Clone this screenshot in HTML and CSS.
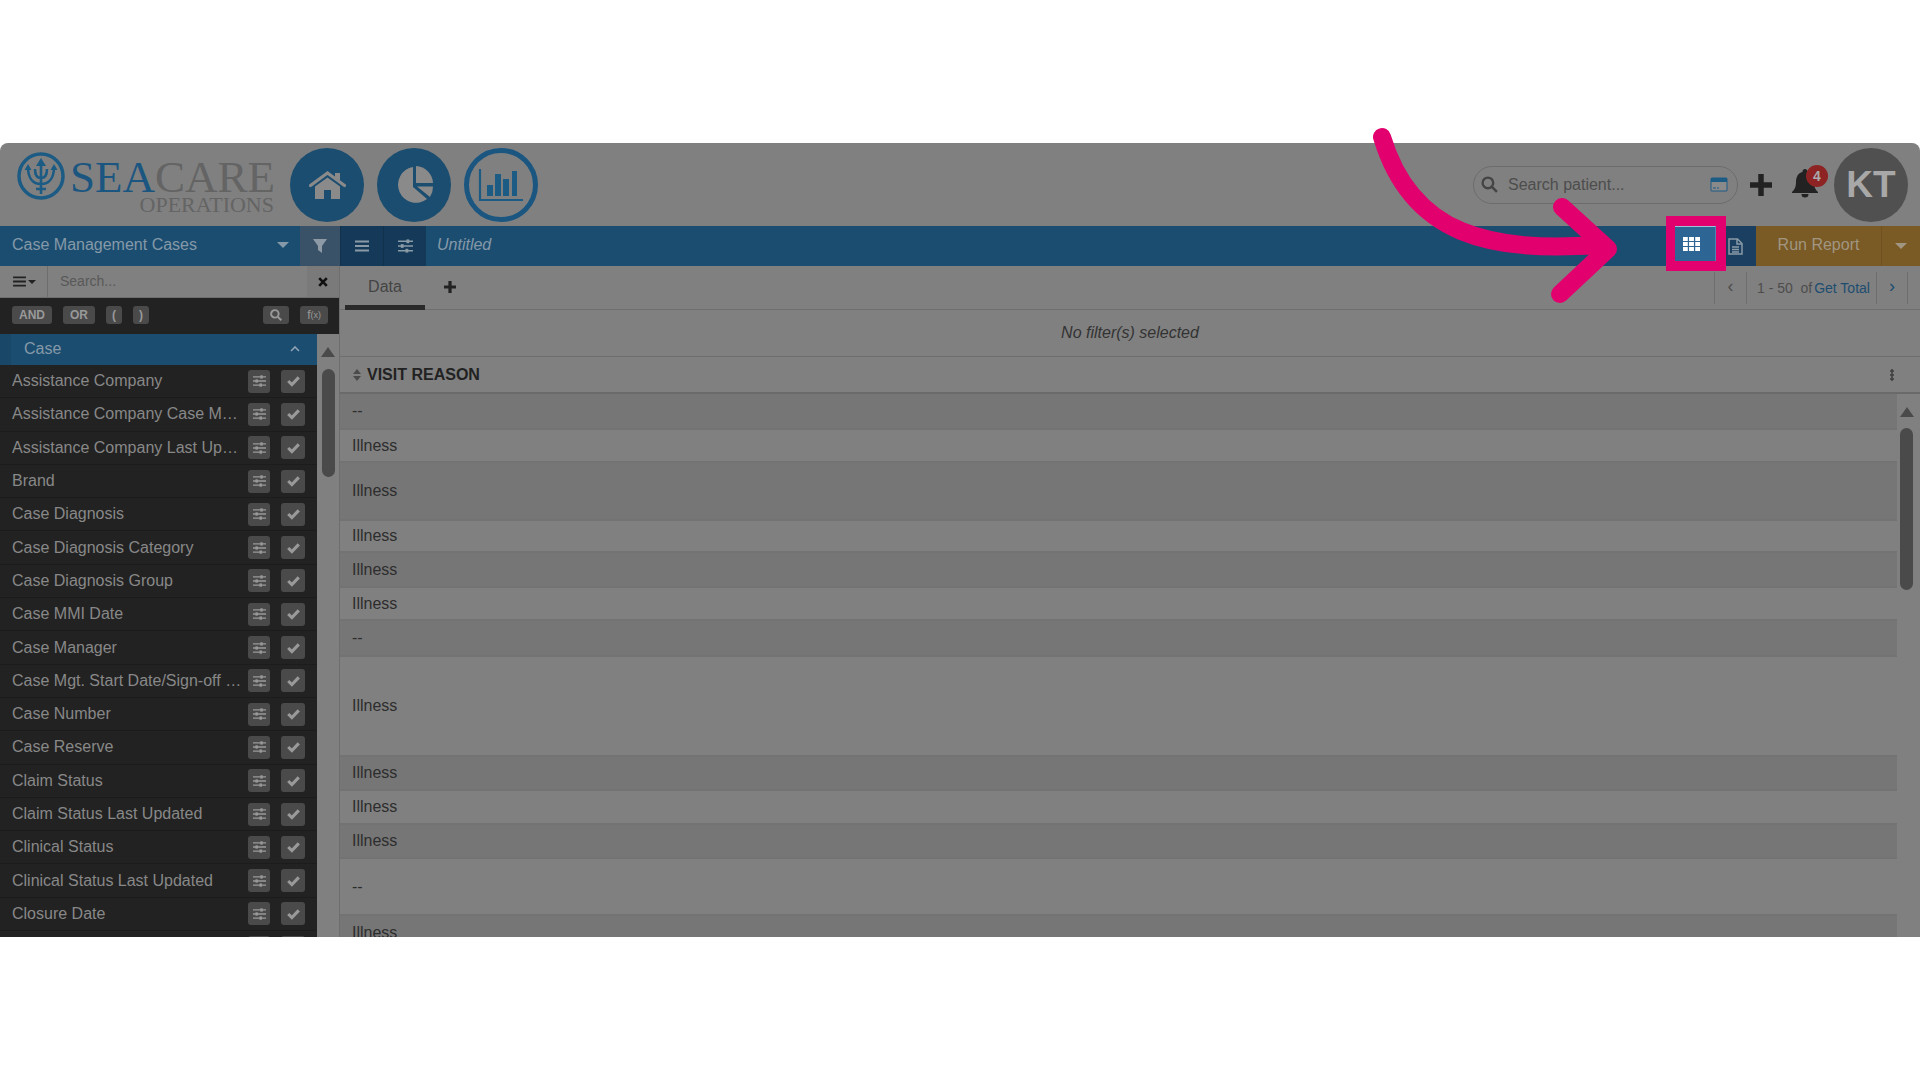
FILE: index.html
```html
<!DOCTYPE html>
<html lang="en">
<head>
  <meta charset="UTF-8">
  <title>Seacare Operations</title>
  <link rel="stylesheet" href="styles.css">
</head>
<body>
  <svg class="defs" width="0" height="0">
    <symbol id="sliders" viewBox="0 0 16 14">
      <path d="M0 2h16M0 7h16M0 12h16" stroke="currentColor" stroke-width="1.6"/>
      <rect x="9" y="0" width="3" height="4" fill="currentColor"/>
      <rect x="3" y="5" width="3" height="4" fill="currentColor"/>
      <rect x="8" y="10" width="3" height="4" fill="currentColor"/>
    </symbol>
    <symbol id="check" viewBox="0 0 16 14">
      <path d="M1.5 7l4.500 4.500 8.500-9" fill="none" stroke="currentColor" stroke-width="3.800"/>
    </symbol>
  </svg>

  <div class="app">
    <header class="top">
      <div class="logo">
        <svg class="trident" viewBox="0 0 48 48">
          <circle cx="24" cy="24" r="22" fill="none" stroke="#1c5b84" stroke-width="3.500"/>
          <path d="M24 11v31M11 15c0 11 5 17 13 17s13-6 13-17M18 17c0 6 2 9 6 9s6-3 6-9M19 37h10" fill="none" stroke="#1c5b84" stroke-width="2.600"/>
          <path d="M24 6l5 8h-10zM11 12l3.500 6h-7zM37 12l3.500 6h-7z" fill="#1c5b84"/>
        </svg>
        <div class="logo-text">
          <div class="logo-name"><span class="sea">SEA</span>CARE</div>
          <div class="logo-sub">OPERATIONS</div>
        </div>
      </div>
      <nav class="nav-circles">
        <a class="circle">
          <svg viewBox="0 0 37 28" width="37" height="28"><path d="M1.500 14.500L18.500 2l17 12.500" fill="none" stroke="#8a8a8a" stroke-width="3.200" stroke-linecap="round"/><path d="M26 2h5v8l-5-4z" fill="#8a8a8a"/><path d="M18.500 6.500L6 15.500V28h9V19h7v9h9V15.500z" fill="#8a8a8a"/></svg>
        </a>
        <a class="circle">
          <svg viewBox="0 0 40 40" width="40" height="40"><path d="M19 2A18 18 0 1 0 33 34L19 22z" fill="#8a8a8a"/><path d="M22 1A18 18 0 0 1 39 18H22z" fill="#8a8a8a"/><path d="M23 21.500H39A19 19 0 0 1 36 32z" fill="#8a8a8a"/></svg>
        </a>
        <a class="circle circle-line">
          <svg viewBox="0 0 46 34" width="46" height="34"><path d="M2 1v31h43" fill="none" stroke="#1c5b84" stroke-width="2.200"/><path d="M9 17h6v11H9zM17 6h6v22h-6zM25 11h6v17h-6zM34 3h5v25h-5z" fill="#1c5b84"/></svg>
        </a>
      </nav>
      <div class="top-right">
        <div class="patient-search">
          <svg viewBox="0 0 16 16" width="17" height="17"><circle cx="6.500" cy="6.500" r="5" fill="none" stroke="#444" stroke-width="2.200"/><path d="M10.500 10.500L15 15" stroke="#444" stroke-width="2.400"/></svg>
          <span class="patient-text">Search patient...</span>
          <svg viewBox="0 0 18 15" width="18" height="15"><rect x="0.500" y="0.500" width="17" height="14" rx="1.500" fill="#1c5b84"/><rect x="1.500" y="5" width="15" height="8.500" fill="#8a8a8a"/><path d="M3 11h3M7 11h2" stroke="#1c5b84"/></svg>
        </div>
        <svg class="plus-icon" viewBox="0 0 22 22" width="22" height="22"><path d="M11 1v20M1 11h20" stroke="#222" stroke-width="5.500" stroke-linecap="round"/></svg>
        <div class="bell">
          <svg viewBox="0 0 26 30" width="26" height="30"><path d="M13 1a2.500 2.500 0 0 1 2.500 3C20 5 22 9 22 14c0 6 2 8 4 10v1H0v-1c2-2 4-4 4-10 0-5 2-9 6.500-10A2.500 2.500 0 0 1 13 1zM9.500 26h7a3.500 3.500 0 0 1-7 0z" fill="#222"/></svg>
          <span class="bell-badge">4</span>
        </div>
        <div class="avatar">KT</div>
      </div>
    </header>

    <div class="bar">
      <div class="bar-select">
        <span>Case Management Cases</span>
        <i class="caret"></i>
      </div>
      <div class="bar-filter">
        <svg viewBox="0 0 14 14" width="14" height="14"><path d="M0 0h14L9 7v7L5 11V7z" fill="#8d9aa6"/></svg>
      </div>
      <div class="bar-btn">
        <svg viewBox="0 0 14 12" width="14" height="12"><path d="M0 1.500h14M0 6h14M0 10.500h14" stroke="#8a9aa6" stroke-width="2"/></svg>
      </div>
      <div class="bar-btn">
        <svg width="15" height="14" class="slider-light"><use href="#sliders"/></svg>
      </div>
      <div class="bar-title">Untitled</div>
      <div class="grid-wrap">
        <div class="grid-btn">
          <svg viewBox="0 0 16 13" width="17" height="14"><path d="M0 0h4.500v3.700H0zM5.700 0h4.600v3.700H5.700zM11.500 0H16v3.700h-4.500zM0 4.700h4.500v3.600H0zM5.700 4.700h4.600v3.600H5.700zM11.500 4.700H16v3.600h-4.500zM0 9.300h4.500V13H0zM5.700 9.300h4.600V13H5.700zM11.500 9.300H16V13h-4.500z" fill="#fff"/></svg>
        </div>
      </div>
      <div class="doc-btn">
        <svg viewBox="0 0 15 17" width="15" height="17"><path d="M1 1h8.500L14 5.500V16H1z" fill="none" stroke="#8a9aa6" stroke-width="1.500"/><path d="M9 1v5h5" fill="none" stroke="#8a9aa6" stroke-width="1.500"/><path d="M4 9h7M4 11.500h7M4 14h7" stroke="#8a9aa6" stroke-width="1.300"/></svg>
      </div>
      <div class="run-btn">Run Report</div>
      <div class="run-caret"><i class="caret"></i></div>
    </div>

    <div class="content">
      <aside class="side">
        <div class="side-search">
          <div class="side-menu">
            <svg viewBox="0 0 14 12" width="13" height="11"><path d="M0 1.500h14M0 6h14M0 10.500h14" stroke="#222" stroke-width="2"/></svg>
            <i class="caret caret-small"></i>
          </div>
          <div class="side-input">Search...</div>
          <div class="side-clear">
            <svg viewBox="0 0 10 10" width="10" height="10"><path d="M1.200 1.200l7.600 7.600M8.800 1.200L1.200 8.800" stroke="#111" stroke-width="2.600"/></svg>
          </div>
        </div>
        <div class="side-tools">
          <span class="chip chip-bold">AND</span>
          <span class="chip chip-bold">OR</span>
          <span class="chip chip-bold chip-paren">(</span>
          <span class="chip chip-bold chip-paren">)</span>
          <span class="chip chip-search">
            <svg viewBox="0 0 16 16" width="12" height="12"><circle cx="6.500" cy="6.500" r="5" fill="none" stroke="#999" stroke-width="2.600"/><path d="M10.500 10.500L15 15" stroke="#999" stroke-width="2.800"/></svg>
          </span>
          <span class="chip chip-fx">f<sub>(x)</sub></span>
        </div>
        <div class="side-body">
          <div class="side-list">
            <div class="group">
              <span>Case</span>
              <svg viewBox="0 0 10 6" width="10" height="6"><path d="M1 5l4-4 4 4" fill="none" stroke="#8fa4b4" stroke-width="1.600"/></svg>
            </div>
            <div class="field"><span class="field-name">Assistance Company</span><b class="mini"><svg><use href="#sliders"/></svg></b><b class="mini mini-check"><svg><use href="#check"/></svg></b></div>
            <div class="field"><span class="field-name">Assistance Company Case Manager</span><b class="mini"><svg><use href="#sliders"/></svg></b><b class="mini mini-check"><svg><use href="#check"/></svg></b></div>
            <div class="field"><span class="field-name">Assistance Company Last Updated</span><b class="mini"><svg><use href="#sliders"/></svg></b><b class="mini mini-check"><svg><use href="#check"/></svg></b></div>
            <div class="field"><span class="field-name">Brand</span><b class="mini"><svg><use href="#sliders"/></svg></b><b class="mini mini-check"><svg><use href="#check"/></svg></b></div>
            <div class="field"><span class="field-name">Case Diagnosis</span><b class="mini"><svg><use href="#sliders"/></svg></b><b class="mini mini-check"><svg><use href="#check"/></svg></b></div>
            <div class="field"><span class="field-name">Case Diagnosis Category</span><b class="mini"><svg><use href="#sliders"/></svg></b><b class="mini mini-check"><svg><use href="#check"/></svg></b></div>
            <div class="field"><span class="field-name">Case Diagnosis Group</span><b class="mini"><svg><use href="#sliders"/></svg></b><b class="mini mini-check"><svg><use href="#check"/></svg></b></div>
            <div class="field"><span class="field-name">Case MMI Date</span><b class="mini"><svg><use href="#sliders"/></svg></b><b class="mini mini-check"><svg><use href="#check"/></svg></b></div>
            <div class="field"><span class="field-name">Case Manager</span><b class="mini"><svg><use href="#sliders"/></svg></b><b class="mini mini-check"><svg><use href="#check"/></svg></b></div>
            <div class="field"><span class="field-name">Case Mgt. Start Date/Sign-off Date</span><b class="mini"><svg><use href="#sliders"/></svg></b><b class="mini mini-check"><svg><use href="#check"/></svg></b></div>
            <div class="field"><span class="field-name">Case Number</span><b class="mini"><svg><use href="#sliders"/></svg></b><b class="mini mini-check"><svg><use href="#check"/></svg></b></div>
            <div class="field"><span class="field-name">Case Reserve</span><b class="mini"><svg><use href="#sliders"/></svg></b><b class="mini mini-check"><svg><use href="#check"/></svg></b></div>
            <div class="field"><span class="field-name">Claim Status</span><b class="mini"><svg><use href="#sliders"/></svg></b><b class="mini mini-check"><svg><use href="#check"/></svg></b></div>
            <div class="field"><span class="field-name">Claim Status Last Updated</span><b class="mini"><svg><use href="#sliders"/></svg></b><b class="mini mini-check"><svg><use href="#check"/></svg></b></div>
            <div class="field"><span class="field-name">Clinical Status</span><b class="mini"><svg><use href="#sliders"/></svg></b><b class="mini mini-check"><svg><use href="#check"/></svg></b></div>
            <div class="field"><span class="field-name">Clinical Status Last Updated</span><b class="mini"><svg><use href="#sliders"/></svg></b><b class="mini mini-check"><svg><use href="#check"/></svg></b></div>
            <div class="field"><span class="field-name">Closure Date</span><b class="mini"><svg><use href="#sliders"/></svg></b><b class="mini mini-check"><svg><use href="#check"/></svg></b></div>
            <div class="field"><span class="field-name"></span><b class="mini"></b><b class="mini mini-check"></b></div>
          </div>
          <div class="side-scroll">
            <i class="arrow-up"></i>
            <i class="side-thumb"></i>
          </div>
        </div>
      </aside>

      <main class="main">
        <div class="tabs">
          <div class="tab">Data</div>
          <svg class="tab-add" viewBox="0 0 14 14" width="14" height="14"><path d="M7 1v12M1 7h12" stroke="#222" stroke-width="3.200"/></svg>
          <div class="pager">
            <span class="pager-arrow">&#8249;</span>
            <span class="pager-text">1 - 50&nbsp; of <a>Get Total</a></span>
            <span class="pager-arrow pager-next">&#8250;</span>
          </div>
        </div>
        <div class="filters">No filter(s) selected</div>
        <div class="col-head">
          <svg viewBox="0 0 8 12" width="8" height="12"><path d="M4 0l4 5H0zM4 12l4-5H0z" fill="#4a4a4a"/></svg>
          <span class="col-title">VISIT REASON</span>
          <span class="col-dots"></span>
        </div>
        <div class="table-wrap">
          <div class="rows">
            <div class="row odd h36">--</div>
            <div class="row h33">Illness</div>
            <div class="row odd h58">Illness</div>
            <div class="row h32">Illness</div>
            <div class="row odd h35">Illness</div>
            <div class="row h33">Illness</div>
            <div class="row odd h36">--</div>
            <div class="row h100">Illness</div>
            <div class="row odd h34">Illness</div>
            <div class="row h34">Illness</div>
            <div class="row odd h34">Illness</div>
            <div class="row h57">--</div>
            <div class="row odd h36">Illness</div>
          </div>
          <div class="table-scroll">
            <i class="arrow-up"></i>
            <i class="table-thumb"></i>
          </div>
        </div>
      </main>
    </div>
  </div>

  <svg class="pointer" viewBox="0 0 400 200" width="400" height="200">
    <path d="M10 10C40 110 120 125 226 118" fill="none" stroke="#e2006f" stroke-width="18" stroke-linecap="round"/>
    <path d="M190 80L236 122 188 167" fill="none" stroke="#e2006f" stroke-width="18" stroke-linecap="round" stroke-linejoin="round"/>
  </svg>
</body>
</html>
```

FILE: styles.css
```css
* {
  box-sizing: border-box;
}
html, body {
  margin: 0;
  height: 100%;
  background: #fff;
  overflow: hidden;
}
body {
  padding-top: 143px;
  font-family: "Liberation Sans", Arial, sans-serif;
  position: relative;
}
.defs {
  position: absolute;
}
.app {
  height: 794px;
  background: #808080;
  border-radius: 8px 8px 0 0;
  overflow: hidden;
  display: flex;
  flex-direction: column;
}

/* top header */
.top {
  height: 83px;
  display: flex;
  align-items: center;
  padding-left: 17px;
  flex-shrink: 0;
}
.logo {
  width: 273px;
  height: 83px;
  display: flex;
  align-items: flex-start;
}
.trident {
  width: 48px;
  height: 48px;
  flex-shrink: 0;
  margin-top: 9px;
}
.logo-text {
  font-family: "Liberation Serif", serif;
  color: #646464;
  text-align: right;
  margin-left: 5px;
  width: 204px;
}
.logo-name {
  font-size: 45px;
  line-height: 45px;
  margin-top: 12px;
  white-space: nowrap;
}
.sea {
  color: #1b5680;
}
.logo-sub {
  font-size: 22px;
  line-height: 20px;
  margin-top: -5px;
}
.nav-circles {
  display: flex;
  gap: 13px;
}
.circle {
  width: 74px;
  height: 74px;
  border-radius: 50%;
  background: #1b4d70;
  display: flex;
  align-items: center;
  justify-content: center;
}
.circle-line {
  background: #808080;
  border: 5px solid #1b5680;
}
.top-right {
  margin-left: auto;
  display: flex;
  align-items: center;
  padding-right: 12px;
}
.patient-search {
  width: 265px;
  height: 38px;
  border: 1px solid #6c6c6c;
  border-radius: 19px;
  display: flex;
  align-items: center;
  padding: 0 9px 0 7px;
}
.patient-text {
  flex: 1;
  margin-left: 10px;
  color: #4d4d4d;
  font-size: 16px;
}
.plus-icon {
  margin-left: 12px;
}
.bell {
  position: relative;
  margin-left: 20px;
  height: 34px;
}
.bell-badge {
  position: absolute;
  top: -3px;
  right: -10px;
  width: 22px;
  height: 22px;
  border-radius: 50%;
  background: #8d2323;
  color: #aaa;
  font-size: 14px;
  font-weight: bold;
  text-align: center;
  line-height: 22px;
}
.avatar {
  width: 74px;
  height: 74px;
  margin-left: 16px;
  border-radius: 50%;
  background: #505050;
  color: #a8a8a8;
  font-size: 37px;
  font-weight: bold;
  text-align: center;
  line-height: 74px;
}

/* blue bar */
.bar {
  height: 40px;
  background: #1b4d70;
  display: flex;
  align-items: stretch;
  flex-shrink: 0;
  color: #8599a8;
  font-size: 16px;
}
.bar-select {
  width: 300px;
  display: flex;
  align-items: center;
  justify-content: space-between;
  padding: 0 11px 2px 12px;
}
.caret {
  display: block;
  width: 0;
  height: 0;
  border-left: 6px solid transparent;
  border-right: 6px solid transparent;
  border-top: 6px solid #8599a8;
}
.caret-small {
  border-left-width: 4px;
  border-right-width: 4px;
  border-top: 4px solid #222;
  margin-left: 2px;
}
.bar-filter {
  width: 40px;
  background: #3a5268;
  display: flex;
  align-items: center;
  justify-content: center;
}
.bar-btn {
  width: 43px;
  background: #153a59;
  border-left: 1px solid #12324c;
  display: flex;
  align-items: center;
  justify-content: center;
}
.slider-light {
  color: #8a9aa6;
}
.bar-title {
  flex: 1;
  padding-left: 11px;
  font-style: italic;
  line-height: 38px;
}
.grid-wrap {
  width: 60px;
  height: 55px;
  margin-top: -10px;
  margin-bottom: -5px;
  border: 9px solid #e2006f;
  border-width: 10px 10px 10px 9px;
  position: relative;
  z-index: 2;
}
.grid-btn {
  height: 100%;
  background: #2d6595;
  border-top: 1px solid #9fc0d8;
  border-right: 1px solid #4a86b4;
  padding-right: 8px;
  display: flex;
  align-items: center;
  justify-content: center;
}
.doc-btn {
  width: 30px;
  background: #1a3f60;
  padding-left: 2px;
  display: flex;
  align-items: center;
}
.run-btn {
  width: 125px;
  background: #7a5a25;
  color: #a09682;
  font-size: 16px;
  text-align: center;
  line-height: 38px;
}
.run-caret {
  width: 39px;
  background: #7a5a25;
  border-left: 1px solid #6f5220;
  display: flex;
  align-items: center;
  justify-content: center;
}
.run-caret .caret {
  border-top-color: #a09682;
}

/* field list */
.content {
  flex: 1;
  display: flex;
  min-height: 0;
}
.side {
  width: 340px;
  flex-shrink: 0;
  display: flex;
  flex-direction: column;
  border-right: 1px solid #6e6e6e;
}
.side-search {
  height: 32px;
  display: flex;
  align-items: stretch;
  flex-shrink: 0;
  border-bottom: 1px solid #6e6e6e;
}
.side-menu {
  width: 48px;
  padding-left: 2px;
  display: flex;
  align-items: center;
  justify-content: center;
  border-right: 1px solid #6e6e6e;
}
.side-input {
  flex: 1;
  padding-left: 12px;
  color: #585858;
  font-size: 14px;
  line-height: 30px;
}
.side-clear {
  width: 32px;
  background: #7a7a7a;
  display: flex;
  align-items: center;
  justify-content: center;
}
.side-tools {
  height: 36px;
  background: #222;
  display: flex;
  align-items: center;
  padding: 0 11px 2px 12px;
  gap: 11px;
  flex-shrink: 0;
}
.chip {
  height: 18px;
  padding: 0 7px;
  border-radius: 3px;
  background: #4a4a4a;
  color: #999;
  font-size: 12px;
  line-height: 18px;
  display: flex;
  align-items: center;
}
.chip-bold {
  font-weight: bold;
}
.chip-paren {
  padding: 0 6px;
}
.chip-search {
  margin-left: auto;
  padding: 0 7px;
}
.chip-fx {
  padding: 0 7px;
}
.chip-fx sub {
  font-size: 9px;
  line-height: 0;
}
.side-body {
  flex: 1;
  display: flex;
  min-height: 0;
}
.side-list {
  width: 317px;
  background: #222;
  overflow: hidden;
}
.group {
  height: 31px;
  background: #1b4d70;
  border-left: 11px solid #194767;
  display: flex;
  align-items: center;
  justify-content: space-between;
  padding: 0 17px 2px 13px;
  color: #8599a8;
  font-size: 16px;
}
.field {
  height: 33.3px;
  display: flex;
  align-items: center;
  padding: 0 12px;
  border-bottom: 1px solid #1c1c1c;
  color: #888;
  font-size: 16px;
}
.field-name {
  flex: 1;
  min-width: 0;
  white-space: nowrap;
  overflow: hidden;
  text-overflow: ellipsis;
  padding-right: 4px;
}
.mini {
  width: 22px;
  height: 23px;
  border-radius: 3px;
  background: #4a4a4a;
  color: #999;
  display: flex;
  align-items: center;
  justify-content: center;
}
.mini svg {
  width: 13px;
  height: 12px;
}
.mini-check {
  width: 24px;
  margin-left: 11px;
}
.side-scroll {
  flex: 1;
  display: flex;
  flex-direction: column;
  align-items: center;
  padding-top: 13px;
}
.arrow-up {
  display: block;
  width: 0;
  height: 0;
  border-left: 7px solid transparent;
  border-right: 7px solid transparent;
  border-bottom: 10px solid #4a4a4a;
}
.side-thumb {
  display: block;
  width: 13px;
  height: 108px;
  margin-top: 12px;
  border-radius: 7px;
  background: #4a4a4a;
}

/* data panel */
.main {
  flex: 1;
  min-width: 0;
  display: flex;
  flex-direction: column;
}
.tabs {
  height: 44px;
  display: flex;
  align-items: flex-start;
  border-bottom: 1px solid #6e6e6e;
  flex-shrink: 0;
  position: relative;
}
.tab {
  width: 80px;
  height: 44px;
  margin-left: 5px;
  border-bottom: 5px solid #2a2a2a;
  color: #444;
  font-size: 16px;
  text-align: center;
  line-height: 41px;
}
.tab-add {
  margin: 14px 0 0 18px;
}
.pager {
  margin-left: auto;
  margin-right: 12px;
  margin-top: 6px;
  height: 32px;
  display: flex;
  align-items: center;
  color: #4d4d4d;
  font-size: 14px;
}
.pager-arrow {
  width: 32px;
  height: 32px;
  border-left: 1px solid #6e6e6e;
  text-align: center;
  line-height: 29px;
  font-size: 18px;
}
.pager-next {
  color: #1c4d70;
  border-right: 1px solid #6e6e6e;
}
.pager-text {
  width: 130px;
  border-left: 1px solid #6e6e6e;
  padding-left: 10px;
  line-height: 32px;
  white-space: nowrap;
}
.pager-text a {
  color: #1c4d70;
  margin-left: -2px;
}
.filters {
  height: 47px;
  color: #333;
  font-size: 16px;
  font-style: italic;
  text-align: center;
  line-height: 45px;
  border-bottom: 1px solid #6e6e6e;
  flex-shrink: 0;
}
.col-head {
  height: 37px;
  display: flex;
  align-items: center;
  padding-left: 13px;
  border-bottom: 2px solid #6a6a6a;
  flex-shrink: 0;
}
.col-title {
  flex: 1;
  margin-left: 6px;
  color: #222;
  font-size: 16px;
  font-weight: bold;
}
.col-dots {
  width: 4px;
  height: 12px;
  margin-right: 26px;
  background: radial-gradient(circle, #444 1.500px, transparent 2px) 0 0 / 4px 4px;
}
.table-wrap {
  flex: 1;
  display: flex;
  min-height: 0;
}
.rows {
  flex: 1;
  overflow: hidden;
}
.row {
  display: flex;
  align-items: center;
  padding-left: 12px;
  border-bottom: 2px solid #737373;
  color: #2d2d2d;
  font-size: 16px;
}
.odd {
  background: #767676;
}
.h32 { height: 32px; }
.h33 { height: 33px; }
.h34 { height: 34px; }
.h35 { height: 35px; }
.h36 { height: 36px; }
.h57 { height: 57px; }
.h58 { height: 58px; }
.h100 { height: 100px; }
.table-scroll {
  width: 23px;
  flex-shrink: 0;
  display: flex;
  flex-direction: column;
  align-items: center;
  padding: 13px 4px 0 0;
}
.table-thumb {
  display: block;
  width: 13px;
  height: 162px;
  margin-top: 11px;
  border-radius: 7px;
  background: #4a4a4a;
}

/* callout arrow sits over the page */
.pointer {
  position: absolute;
  left: 1372px;
  top: 127px;
  pointer-events: none;
}
```
